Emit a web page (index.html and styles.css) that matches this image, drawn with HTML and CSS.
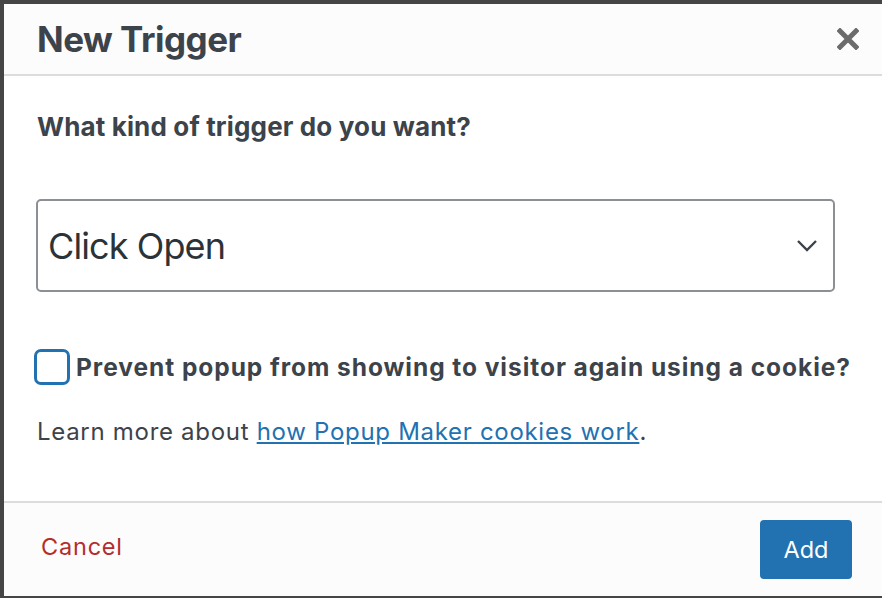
FILE: index.html
```html
<!DOCTYPE html>
<html lang="en">
<head>
    <meta charset="UTF-8">
    <meta name="viewport" content="width=device-width, initial-scale=1.0">
    <title>New Trigger</title>
    <link rel="stylesheet" href="styles.css">
</head>
<body>
    <!-- Trigger modal -->
    <div class="modal">
        <div class="modal-header">
            <h2 class="modal-title">New Trigger</h2>
            <button class="close-btn" type="button" aria-label="Close">
                <svg width="22" height="22" viewBox="0 0 22 22">
                    <path d="M3 3 L19 19 M19 3 L3 19" stroke="#6b6b6b" stroke-width="5" stroke-linecap="square" fill="none"/>
                </svg>
            </button>
        </div>

        <div class="modal-body">
            <label class="question" for="trigger">What kind of trigger do you want?</label>

            <div class="select-box">
                <span class="select-value">Click Open</span>
                <svg class="chevron" width="22" height="13" viewBox="0 0 22 13">
                    <path d="M2 2 L11 11 L20 2" stroke="#3c434a" stroke-width="2.4" fill="none"/>
                </svg>
            </div>

            <div class="check-row">
                <span class="checkbox"></span>
                <span class="check-label">Prevent popup from showing to visitor again using a cookie?</span>
            </div>

            <p class="learn-more">Learn more about <a href="#">how Popup Maker cookies work</a>.</p>
        </div>

        <div class="modal-footer">
            <a class="cancel" href="#">Cancel</a>
            <button class="add-btn" type="button">Add</button>
        </div>
    </div>
</body>
</html>
```

FILE: styles.css
```css
body {
    font-family: Inter, "Open Sans", sans-serif;
    background-color: #454545;
    margin: 0;
    padding: 0;
    color: #3c434a;
}
.modal {
    height: 592px;
    margin: 4px 0 2px 4px;
    background-color: white;
    display: flex;
    flex-direction: column;
}
.modal-header {
    height: 70px;
    background-color: #fcfcfc;
    border-bottom: 2px solid #dcdcde;
    display: flex;
    align-items: center;
    justify-content: space-between;
    padding: 0 23px 0 33px;
}
.modal-title {
    margin: 0;
    font-size: 35px;
    font-weight: 700;
    letter-spacing: -0.5px;
    color: #3c434a;
}
.close-btn {
    background: none;
    border: none;
    padding: 0;
    width: 22px;
    height: 22px;
    cursor: pointer;
}
.modal-body {
    flex: 1;
    padding: 34px 47px 0 32px;
}
.question {
    display: block;
    font-size: 26px;
    font-weight: 700;
    letter-spacing: 0.15px;
    line-height: 34px;
    margin-left: 1px;
}
.select-box {
    height: 89px;
    margin-top: 55px;
    border: 2px solid #8c8f94;
    border-radius: 5px;
    display: flex;
    align-items: center;
    justify-content: space-between;
    padding: 0 15px 0 10px;
}
.select-value {
    font-size: 36px;
    letter-spacing: -0.9px;
    color: #2c3338;
}
.check-row {
    display: flex;
    align-items: center;
    margin-top: 57px;
    margin-left: -2px;
}
.checkbox {
    width: 30px;
    height: 30px;
    border: 3px solid #2271b1;
    border-radius: 7px;
    margin-right: 6px;
    flex-shrink: 0;
}
.check-label {
    font-size: 24.5px;
    font-weight: 700;
    letter-spacing: 0.95px;
    white-space: nowrap;
}
.learn-more {
    font-size: 24px;
    letter-spacing: 0.7px;
    margin: 32px 0 0 1px;
}
.learn-more a {
    color: #2271b1;
}
.modal-footer {
    height: 93px;
    background-color: #fcfcfc;
    border-top: 2px solid #dcdcde;
    display: flex;
    align-items: center;
    justify-content: space-between;
    padding: 0 30px 0 37px;
}
.cancel {
    color: #b32d2e;
    font-size: 23.5px;
    letter-spacing: 0.8px;
    text-decoration: none;
    margin-top: -6px;
}
.add-btn {
    width: 92px;
    height: 59px;
    background-color: #2271b1;
    color: white;
    border: none;
    border-radius: 4px;
    font-family: inherit;
    font-size: 23.5px;
    cursor: pointer;
}
```
